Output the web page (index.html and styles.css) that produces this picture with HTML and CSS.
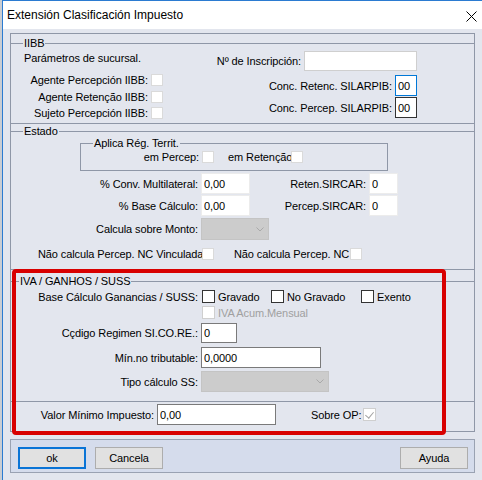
FILE: index.html
```html
<!DOCTYPE html>
<html lang="es">
<head>
    <meta charset="UTF-8">
    <title>Extensión Clasificación Impuesto</title>
    <link rel="stylesheet" href="styles.css">
</head>
<body>
<div class="window">
    <div class="titlebar">
        <span class="title">Extensión Clasificación Impuesto</span>
        <svg class="close" width="11" height="11" viewBox="0 0 11 11"><path d="M0.5 0.5 L10.5 10.5 M10.5 0.5 L0.5 10.5" stroke="#000" stroke-width="1" fill="none"/></svg>
    </div>

    <div class="dialog">
        <div class="panel">
            <!-- IIBB -->
            <fieldset class="group group-iibb">
                <legend>IIBB</legend>
                <div class="iibb">
                    <div class="iibb-left">
                        <div class="note">Parámetros de sucursal.</div>
                        <div class="row row-chk mt7"><label class="lbl lbl-iibb">Agente Percepción IIBB:</label><input type="checkbox" class="chk"></div>
                        <div class="row row-chk mt1"><label class="lbl lbl-iibb">Agente Retenção IIBB:</label><input type="checkbox" class="chk"></div>
                        <div class="row row-chk"><label class="lbl lbl-iibb">Sujeto Percepción IIBB:</label><input type="checkbox" class="chk"></div>
                    </div>
                    <div class="iibb-right">
                        <div class="row mt1"><label class="lbl">Nº de Inscripción:</label><input type="text" class="txt txt-light insc"></div>
                        <div class="row mt4"><label class="lbl">Conc. Retenc. SILARPIB:</label><input type="text" class="txt txt-focus conc" value="00"></div>
                        <div class="row mt1"><label class="lbl">Conc. Percep. SILARPIB:</label><input type="text" class="txt txt-dark conc" value="00"></div>
                    </div>
                </div>
            </fieldset>

            <!-- Estado -->
            <fieldset class="group group-estado">
                <legend>Estado</legend>
                <fieldset class="group-territ">
                    <legend>Aplica Rég. Territ.</legend>
                    <div class="row row-chk2">
                        <label class="lbl lbl-percep">em Percep:</label><input type="checkbox" class="chk">
                        <label class="clip clip-ret">em Retenção</label><input type="checkbox" class="chk">
                    </div>
                </fieldset>
                <div class="row mt2">
                    <label class="lbl lbl-main">% Conv. Multilateral:</label><input type="text" class="txt pct" value="0,00">
                    <label class="lbl lbl-sircar">Reten.SIRCAR:</label><input type="text" class="txt sircar" value="0">
                </div>
                <div class="row mt1">
                    <label class="lbl lbl-main">% Base Cálculo:</label><input type="text" class="txt pct" value="0,00">
                    <label class="lbl lbl-sircar">Percep.SIRCAR:</label><input type="text" class="txt sircar" value="0">
                </div>
                <div class="row mt2">
                    <label class="lbl lbl-main">Calcula sobre Monto:</label>
                    <div class="combo combo-monto"><svg width="8" height="5" viewBox="0 0 8 5"><path d="M0.5 0.5 L4 4 L7.5 0.5" stroke="#a9a9a9" fill="none"/></svg></div>
                </div>
                <div class="row row-chk2 mt7">
                    <label class="clip clip-nc">Não calcula Percep. NC Vinculada</label><input type="checkbox" class="chk">
                    <label class="nc2">Não calcula Percep. NC</label><input type="checkbox" class="chk">
                </div>
            </fieldset>

            <!-- IVA / GANHOS / SUSS -->
            <fieldset class="group group-iva">
                <legend>IVA / GANHOS / SUSS</legend>
                <div class="row row-opt mt1">
                    <label class="lbl lbl-main">Base Cálculo Ganancias / SUSS:</label>
                    <label class="opt opt-grav"><input type="checkbox" class="chk chk-dark">Gravado</label>
                    <label class="opt opt-nograv"><input type="checkbox" class="chk chk-dark">No Gravado</label>
                    <label class="opt"><input type="checkbox" class="chk chk-dark">Exento</label>
                </div>
                <div class="row row-opt indent mt1">
                    <label class="opt opt-off"><input type="checkbox" class="chk chk-off" disabled>IVA Acum.Mensual</label>
                </div>
                <div class="row mt3">
                    <label class="lbl lbl-main">Cçdigo Regimen SI.CO.RE.:</label><input type="text" class="txt txt-mid sicore" value="0">
                </div>
                <div class="row mt4">
                    <label class="lbl lbl-main">Mín.no tributable:</label><input type="text" class="txt txt-mid minimo" value="0,0000">
                </div>
                <div class="row mt3">
                    <label class="lbl lbl-main">Tipo cálculo SS:</label>
                    <div class="combo combo-tipo"><svg width="8" height="5" viewBox="0 0 8 5"><path d="M0.5 0.5 L4 4 L7.5 0.5" stroke="#a9a9a9" fill="none"/></svg></div>
                </div>
            </fieldset>

            <div class="group-plain">
                <div class="row mt2">
                    <label class="lbl lbl-valor">Valor Mínimo Impuesto:</label><input type="text" class="txt txt-mid valor" value="0,00">
                    <label class="sobre">Sobre OP:</label><input type="checkbox" class="chk chk-off chk-on" checked disabled>
                </div>
            </div>
        </div>

        <div class="buttons">
            <button type="button" class="btn btn-default">ok</button>
            <button type="button" class="btn btn-cancel">Cancela</button>
            <button type="button" class="btn btn-help">Ayuda</button>
        </div>
    </div>

    <div class="highlight"></div>
</div>
</body>
</html>
```

FILE: styles.css
```css
* {
    box-sizing: border-box;
}

body {
    margin: 0;
    background-color: #c9cdd3;
    font-family: "Liberation Sans", Arial, sans-serif;
    font-size: 11px;
    letter-spacing: -0.1px;
    color: #000;
}

.window {
    position: relative;
    height: 480px;
    margin-left: 2px;
    border-top: 1px solid #2b7bd1;
    border-left: 1px solid #2b7bd1;
    background-color: #e3e6ee;
}

.titlebar {
    height: 28px;
    background-color: #fff;
    display: flex;
    align-items: center;
    justify-content: space-between;
    padding: 0 5px 0 4px;
}

.title {
    font-size: 12px;
    letter-spacing: 0;
}

.close {
    margin-top: 2px;
}

.dialog {
    padding: 4px 7px 0 7px;
}

.panel {
    height: 399px;
    border: 1px solid #8f97a7;
}

/* group boxes */
fieldset {
    margin: 0;
    padding: 0;
    min-width: 0;
    border: 0;
}

legend {
    padding: 0 1px;
    line-height: 13px;
    margin-left: 12px;
}

.group {
    border-top: 1px solid #8f97a7;
    border-bottom: 1px solid #8f97a7;
}

.group-iibb {
    margin-top: 3px;
    padding-bottom: 2px;
}

.group-estado {
    margin-top: 1px;
    padding-bottom: 8px;
}

.group-territ {
    width: 308px;
    margin: -1px 0 0 69px;
    padding-bottom: 6px;
    border: 1px solid #8f97a7;
}

.group-iva {
    margin-top: 5px;
    padding-bottom: 9px;
}

.group-iva legend {
    margin-left: 8px;
}

.group-plain {
    height: 29px;
    overflow: hidden;
}

/* rows */
.row {
    display: flex;
    align-items: center;
}

.row-chk {
    height: 16px;
}

.row-chk2 {
    height: 14px;
}

.row-opt {
    height: 15px;
}

.mt1 { margin-top: 1px; }
.mt2 { margin-top: 2px; }
.mt3 { margin-top: 3px; }
.mt4 { margin-top: 4px; }
.mt7 { margin-top: 7px; }

.lbl {
    flex: none;
    text-align: right;
    white-space: nowrap;
    margin-right: 3px;
}

.lbl-iibb { width: 124px; }
.lbl-main { width: 187px; }
.lbl-sircar { width: 116px; }
.lbl-percep { width: 118px; }
.lbl-valor { width: 143px; }

.clip {
    flex: none;
    overflow: hidden;
    white-space: nowrap;
}

.clip-ret {
    width: 63px;
    margin-left: 14px;
}

.clip-nc {
    width: 164px;
    margin-left: 27px;
}

.nc2 {
    white-space: nowrap;
    margin: 0 1px 0 20px;
}

/* IIBB columns */
.iibb {
    display: flex;
    justify-content: space-between;
    padding: 0 57px 0 13px;
}

.note {
    margin-top: 2px;
    line-height: 13px;
}

.iibb-right {
    display: flex;
    flex-direction: column;
    align-items: flex-end;
}

/* text boxes */
.txt {
    height: 21px;
    margin: 0;
    padding: 0 2px;
    border: 1px solid #ececec;
    background-color: #fff;
    font: inherit;
    letter-spacing: inherit;
    color: #000;
    outline: none;
}

.txt-light { border-color: #cfcfcf; }
.txt-focus { border-color: #0078d7; }
.txt-dark { border-color: #333; }
.txt-mid { border-color: #7a7a7a; }

.insc { width: 113px; height: 20px; }
.conc { width: 22px; }
.pct { width: 49px; }
.sircar { width: 29px; }
.sicore { width: 36px; height: 20px; }
.minimo { width: 120px; }
.valor { width: 119px; }

/* combos */
.combo {
    display: flex;
    align-items: center;
    justify-content: flex-end;
    padding-right: 4px;
    background-color: #cccccc;
    border: 1px solid #c4c4c4;
}

.combo-monto { width: 68px; height: 22px; }
.combo-tipo { width: 128px; height: 21px; }

/* check boxes */
.chk {
    appearance: none;
    -webkit-appearance: none;
    position: relative;
    flex: none;
    width: 12px;
    height: 12px;
    margin: 0;
    border: 1px solid #dadada;
    background-color: #fff;
}

.chk-dark {
    width: 13px;
    height: 13px;
    border-color: #333;
}

.chk-off {
    width: 13px;
    height: 13px;
    border-color: #cfcfcf;
}

.chk-on::after {
    content: "";
    position: absolute;
    left: 3px;
    top: 1px;
    width: 4px;
    height: 7px;
    border-right: 1px solid #a3a3a3;
    border-bottom: 1px solid #a3a3a3;
    transform: rotate(40deg);
}

.opt {
    display: flex;
    align-items: center;
    gap: 3px;
    white-space: nowrap;
}

.row-opt .lbl + .opt {
    margin-left: 1px;
}

.opt-grav { width: 69px; }
.opt-nograv { width: 90px; }

.indent {
    padding-left: 191px;
}

.opt-off {
    color: #a0a0a0;
}

.sobre {
    margin: 0 2px 0 35px;
    white-space: nowrap;
}

/* bottom buttons */
.buttons {
    display: flex;
    height: 34px;
    margin-top: 7px;
    padding: 7px 6px 0 7px;
    border: 1px solid #9aa2b2;
    background-color: #d5dcec;
}

.btn {
    width: 68px;
    height: 22px;
    margin: 0;
    padding: 0;
    border: 1px solid #adadad;
    background-color: #e1e1e1;
    font: inherit;
    letter-spacing: inherit;
    color: #000;
}

.btn-default {
    border: 2px solid #0a74d6;
}

.btn-cancel {
    margin-left: 9px;
}

.btn-help {
    margin-left: auto;
}

/* red annotation drawn over the form */
.highlight {
    position: absolute;
    left: 9px;
    top: 268px;
    width: 434px;
    height: 166px;
    border: 4px solid #d80000;
    border-radius: 4px;
    pointer-events: none;
}
```
